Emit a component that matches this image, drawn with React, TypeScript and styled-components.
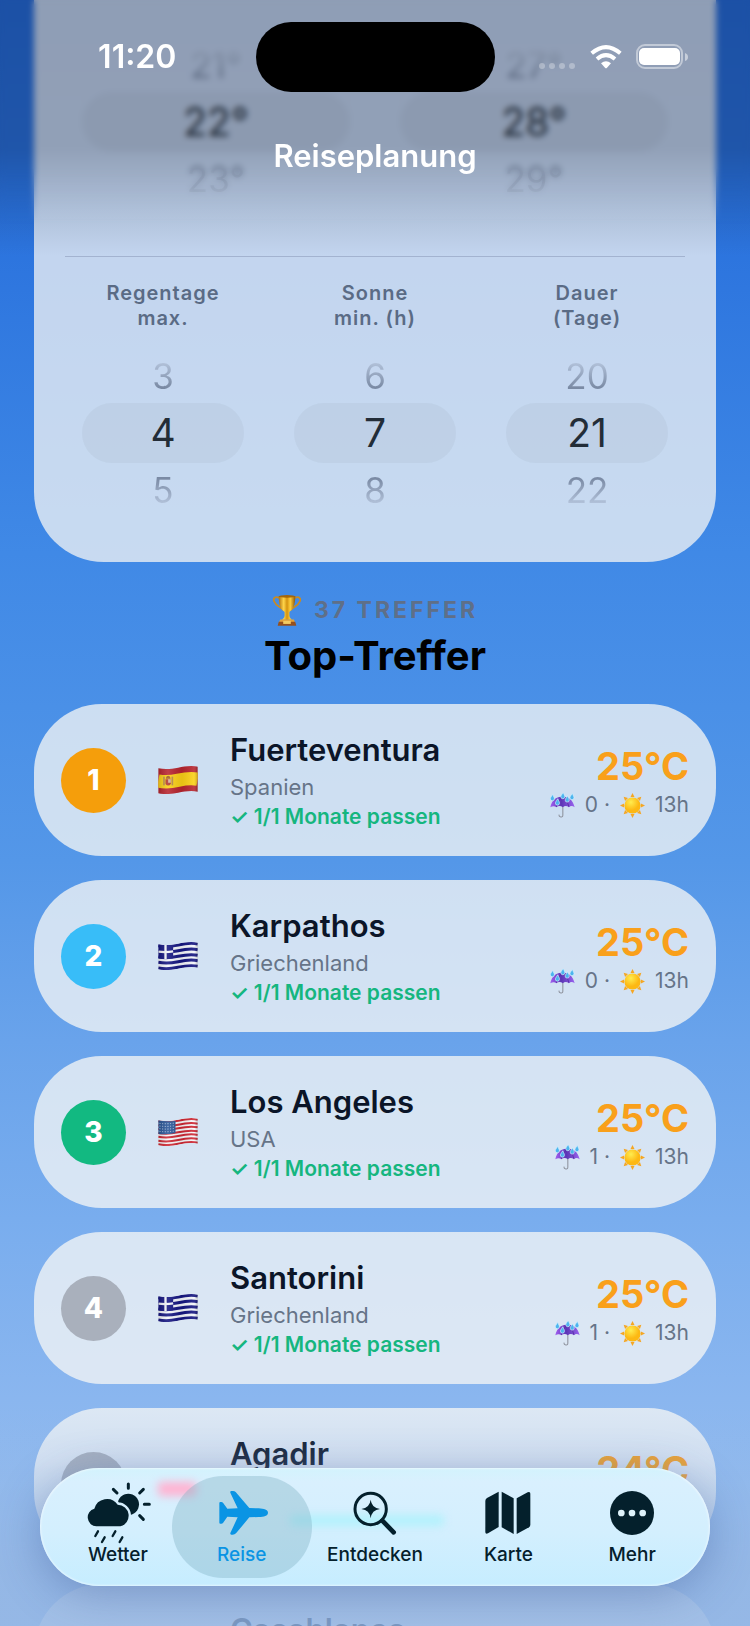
import { ReactNode, useId, useState } from 'react';
import styled, { createGlobalStyle } from 'styled-components';

const GlobalStyle = createGlobalStyle`
  * {
    box-sizing: border-box;
  }

  body {
    margin: 0;
    font-family: Inter, 'Liberation Sans', sans-serif;
    -webkit-font-smoothing: antialiased;
  }

  button {
    font: inherit;
  }
`;

const Screen = styled.div`
  position: relative;
  height: 100vh;
  overflow: hidden;
  background: linear-gradient(
    180deg,
    #266bd9 0%,
    #2c74de 15%,
    #4089e6 34%,
    #5497e8 53%,
    #69a3eb 64%,
    #79adee 75%,
    #8ab6ef 86%,
    #9ac0ee 100%
  );
`;

/* Header */

const Header = styled.header`
  position: absolute;
  inset: 0 0 auto;
  z-index: 1;
  height: 256px;
  padding-top: 22px;
  color: #fff;
  background: linear-gradient(
    180deg,
    rgba(0, 6, 20, 0.26) 0%,
    rgba(0, 6, 20, 0.25) 58%,
    rgba(0, 6, 20, 0.1) 82%,
    rgba(0, 6, 20, 0) 100%
  );

  &::before {
    content: '';
    position: absolute;
    inset: 0 0 32px;
    z-index: -1;
    backdrop-filter: blur(3px);
    mask-image: linear-gradient(180deg, #000 75%, transparent 100%);
  }
`;

const StatusBar = styled.div`
  display: grid;
  grid-template-columns: 1fr auto 1fr;
  align-items: center;
  justify-items: center;
  padding: 0 19px;
`;

const Time = styled.time`
  font-size: 32px;
  font-weight: 600;
  line-height: 40px;
`;

const Island = styled.div`
  width: 239px;
  height: 70px;
  border-radius: 35px;
  background: #000;
`;

const StatusIcons = styled.div`
  display: flex;
  align-items: center;
  gap: 14px;
`;

const Title = styled.h1`
  margin: 44px 0 0;
  font-size: 31px;
  font-weight: 600;
  line-height: 40px;
  text-align: center;
`;

/* Filters */

const Content = styled.main`
  padding: 0 34px;
`;

const FilterCard = styled.section`
  padding: 38px 31px 45px;
  border-radius: 0 0 70px 70px;
  background: rgba(245, 246, 244, 0.75);
`;

const PickerRow = styled.div`
  display: flex;
  gap: 16px;
`;

const Divider = styled.hr`
  height: 1px;
  margin: 50px 0 24px;
  border: 0;
  background: #a3b3d0;
`;

const PickerGroup = styled.fieldset`
  flex: 1;
  min-width: 0;
  margin: 0;
  padding: 0 17px;
  border: 0;
`;

const PickerLabel = styled.legend`
  width: 100%;
  padding: 0 0 18px;
  color: #5a6b85;
  font-size: 20px;
  font-weight: 600;
  letter-spacing: 1px;
  line-height: 25px;
  text-align: center;
  white-space: pre-line;
`;

const HiddenLegend = styled.legend`
  position: absolute;
  width: 1px;
  height: 1px;
  padding: 0;
  overflow: hidden;
  clip-path: inset(50%);
`;

const Option = styled.label<{ $offset: number }>`
  display: block;
  height: ${({ $offset }) => ($offset === 0 ? 60 : 54)}px;
  border-radius: 30px;
  background: ${({ $offset }) => ($offset === 0 ? 'rgba(120, 130, 140, 0.09)' : 'none')};
  color: #232d38;
  font-size: ${({ $offset }) => ($offset === 0 ? 39 : 35)}px;
  line-height: ${({ $offset }) => ($offset === 0 ? 60 : 54)}px;
  text-align: center;
  cursor: pointer;

  input {
    position: absolute;
    opacity: 0;
    pointer-events: none;
  }

  span {
    display: block;
    ${({ $offset }) =>
      $offset !== 0 &&
      `
      color: transparent;
      background: linear-gradient(${$offset < 0 ? 180 : 0}deg, #b3c3db 24%, #7a8aa4 72%);
      background-clip: text;
    `}
  }
`;

/* Results */

const ResultsHeader = styled.div`
  display: flex;
  flex-direction: column;
  align-items: center;
  padding: 29px 0 22px;
`;

const HitCount = styled.p`
  display: flex;
  align-items: center;
  gap: 12px;
  margin: 0;
  color: #5f6f88;
  font-size: 23px;
  font-weight: 700;
  letter-spacing: 3px;
  line-height: 38px;
`;

const ResultsTitle = styled.h2`
  margin: 0;
  color: #000;
  font-size: 40px;
  font-weight: 700;
  line-height: 53px;
`;

const ResultList = styled.ol`
  display: flex;
  flex-direction: column;
  gap: 24px;
  margin: 0;
  padding: 0;
  list-style: none;
`;

const ResultCard = styled.li`
  display: flex;
  align-items: center;
  gap: 24px;
  height: 152px;
  padding: 0 27px;
  border-radius: 68px;
  background: rgba(248, 248, 246, 0.75);
`;

const Rank = styled.span<{ $color: string }>`
  display: flex;
  flex: none;
  align-items: center;
  justify-content: center;
  width: 65px;
  height: 65px;
  border-radius: 50%;
  background: ${({ $color }) => $color};
  color: #fff;
  font-size: 28px;
  font-weight: 800;
`;

const FlagSlot = styled.span`
  display: flex;
  flex: none;
  justify-content: center;
  width: 56px;
`;

const Place = styled.div`
  flex: 1;
  min-width: 0;
`;

const PlaceName = styled.h3`
  margin: 0;
  color: #0b1528;
  font-size: 31px;
  font-weight: 600;
  line-height: 42px;
`;

const Country = styled.p`
  margin: 0;
  color: #667488;
  font-size: 22px;
  line-height: 32px;
`;

const Match = styled.p`
  margin: 0;
  color: #15b67f;
  font-size: 21px;
  font-weight: 600;
  line-height: 28px;
`;

const Climate = styled.div`
  flex: none;
  padding-top: 6px;
  text-align: right;
`;

const Temperature = styled.p`
  margin: 0;
  color: #f9a01b;
  font-size: 38px;
  font-weight: 700;
  line-height: 44px;
`;

const Details = styled.p`
  display: flex;
  align-items: center;
  justify-content: flex-end;
  gap: 10px;
  margin: 0;
  color: #667488;
  font-size: 21px;
  line-height: 34px;
`;

/* Tab bar */

const BottomFade = styled.div`
  position: absolute;
  inset: auto 0 0;
  height: 220px;
  background: linear-gradient(
    180deg,
    rgba(148, 182, 228, 0) 0%,
    rgba(148, 182, 228, 0.18) 25%,
    rgba(148, 182, 228, 0.82) 75%
  );
  pointer-events: none;
`;

const TabBar = styled.nav`
  position: absolute;
  inset: auto 40px 40px;
  display: grid;
  grid-template-columns: 1fr 1fr 143px 1fr 1fr;
  height: 118px;
  padding: 8px 16px;
  border-radius: 59px;
  background: linear-gradient(180deg, #d2f3fd 0%, #d9f0fe 12%, #d3effe 55%, #c6edff 100%);
  box-shadow:
    inset 0 0 2px 1px rgba(255, 255, 255, 0.5),
    0 8px 44px rgba(50, 78, 140, 0.36);
`;

const Glint = styled.span<{ $color: string }>`
  position: absolute;
  border-radius: 4px;
  background: ${({ $color }) => $color};
  filter: blur(4px);
`;

const PinkGlint = styled(Glint)`
  inset: 14px auto auto 118px;
  width: 38px;
  height: 14px;
`;

const CyanGlint = styled(Glint)`
  inset: 47px auto auto 250px;
  width: 154px;
  height: 11px;
`;

const Tab = styled.button<{ $active: boolean }>`
  position: relative;
  display: flex;
  flex-direction: column;
  align-items: center;
  margin: 0 -8px;
  padding: 7px 0 0;
  border: 0;
  border-radius: 51px;
  background: ${({ $active }) => ($active ? 'rgba(125, 175, 195, 0.38)' : 'none')};
  color: ${({ $active }) => ($active ? '#0a94e4' : '#04202c')};
  font-size: 19px;
  font-weight: 500;
  line-height: 24px;
  cursor: pointer;

  svg {
    overflow: visible;
  }
`;

const wave = (y: number) => `M0 ${y} C20 ${y + 4} 42 ${y + 2} 60 ${y - 2} S100 ${y - 9} 119 ${y - 5}`;

function WavingFlag({ children }: { children: ReactNode }) {
  const id = useId();

  return (
    <svg width="40" height="28" viewBox="0 0 119 84" aria-hidden="true">
      <defs>
        <clipPath id={`${id}-cloth`}>
          <path d="M0 7 C20 11 42 9 60 5 S100 -2 119 2 V77 C100 73 78 76 60 80 S20 86 0 82Z" />
        </clipPath>
        <linearGradient id={`${id}-fold`}>
          <stop offset="0" stopColor="#000" stopOpacity="0.15" />
          <stop offset="0.25" stopColor="#fff" stopOpacity="0.12" />
          <stop offset="0.6" stopColor="#000" stopOpacity="0.08" />
          <stop offset="0.9" stopColor="#fff" stopOpacity="0.1" />
          <stop offset="1" stopColor="#000" stopOpacity="0.25" />
        </linearGradient>
      </defs>
      <g clipPath={`url(#${id}-cloth)`}>
        {children}
        <rect width="119" height="84" fill={`url(#${id}-fold)`} />
      </g>
    </svg>
  );
}

function SpainFlag() {
  return (
    <WavingFlag>
      <rect width="119" height="84" fill="#b8252f" />
      <path d={wave(45)} stroke="#fbd116" strokeWidth="40" fill="none" />
      <rect x="15" y="32" width="5" height="26" fill="#b98c4a" />
      <rect x="40" y="32" width="5" height="26" fill="#b98c4a" />
      <path d="M22 40 H38 V54 Q30 63 22 54Z" fill="#b53a2e" />
      <path d="M30 40 H38 V50 H30Z" fill="#d7b7a2" />
      <path d="M23 38 Q24 29 30 29 T37 38Z" fill="#a35f25" />
    </WavingFlag>
  );
}

function GreeceFlag() {
  return (
    <WavingFlag>
      <rect width="119" height="84" fill="#f4f6fb" />
      {[11, 28, 45, 61, 78].map((y) => (
        <path key={y} d={wave(y)} stroke="#151682" strokeWidth="9" fill="none" />
      ))}
      <path d="M0 7 Q24 12 45 8 V49 Q24 53 0 49Z" fill="#151682" />
      <path d="M0 29 Q24 32 45 28 M22 8 V52" stroke="#f4f6fb" strokeWidth="7" fill="none" />
    </WavingFlag>
  );
}

function UsaFlag() {
  return (
    <WavingFlag>
      <rect width="119" height="84" fill="#f8f8fa" />
      {[10, 22, 33, 45, 56, 68, 79].map((y) => (
        <path key={y} d={wave(y)} stroke="#cf2733" strokeWidth="6" fill="none" />
      ))}
      <path d="M0 6 Q26 12 52 8 V45 Q26 51 0 48Z" fill="#2a5698" />
      {[15, 23, 31, 39].map((y) => (
        <path
          key={y}
          d={`M4 ${y + 1} Q26 ${y + 4} 50 ${y}`}
          stroke="#c6d6ec"
          strokeWidth="3"
          strokeDasharray="3 5"
          fill="none"
        />
      ))}
    </WavingFlag>
  );
}

function MoroccoFlag() {
  return (
    <WavingFlag>
      <rect width="119" height="84" fill="#c1272d" />
      <path d="M60 24 L71 58 L42 37 H78 L49 58Z" fill="none" stroke="#006233" strokeWidth="4" />
    </WavingFlag>
  );
}

function TrophyIcon() {
  return (
    <svg width="30" height="31" viewBox="0 0 84 90" aria-hidden="true">
      <defs>
        <linearGradient id="trophy-gold">
          <stop offset="0" stopColor="#b06f0c" />
          <stop offset="0.3" stopColor="#ffd54a" />
          <stop offset="0.5" stopColor="#d4930f" />
          <stop offset="0.7" stopColor="#ffcf3d" />
          <stop offset="1" stopColor="#8f5607" />
        </linearGradient>
      </defs>
      <path
        d="M20 9 C8 3 0 9 5 19 C9 31 21 33 32 44 M64 9 C76 3 84 9 79 19 C75 31 63 33 52 44"
        fill="none"
        stroke="#c98b22"
        strokeWidth="5"
      />
      <path d="M18 3 H66 C66 30 60 42 49 49 V60 C49 66 54 69 57 72 H27 C30 69 35 66 35 60 V49 C24 42 18 30 18 3Z" fill="url(#trophy-gold)" />
      <ellipse cx="42" cy="4" rx="24" ry="4" fill="#a5660a" />
      <path d="M22 71 H62 L65 79 H19Z" fill="#e4a33b" />
      <path d="M18 78 H66 L69 89 H15Z" fill="#96501d" />
      <rect x="31" y="75" width="22" height="9" fill="#f3cb63" />
    </svg>
  );
}

function UmbrellaIcon() {
  return (
    <svg width="25" height="25" viewBox="0 0 74 74" role="img" aria-label="Regentage">
      <defs>
        <linearGradient id="umbrella-cloth">
          <stop offset="0" stopColor="#a15ff0" />
          <stop offset="0.45" stopColor="#5b35b5" />
          <stop offset="1" stopColor="#9a63ef" />
        </linearGradient>
      </defs>
      <path d="M38 38 V66 Q38 72 32 71 Q26 70 27 64" fill="none" stroke="#8b8f99" strokeWidth="3" />
      <path d="M1 42 C5 20 20 10 37 10 S68 20 73 42 C66 37 60 38 56 42 C50 37 43 37 38 42 C32 37 24 37 19 42 C14 38 8 38 1 42Z" fill="url(#umbrella-cloth)" />
      <path d="M37 11 C28 19 22 28 19 41 M37 11 C47 19 53 28 56 41" fill="none" stroke="#4a2996" strokeWidth="2" />
      {['M8 4', 'M23 17', 'M39 -2', 'M52 8', 'M66 1'].map((start) => (
        <path key={start} d={`${start} c-5 8 -7 10 -7 13 a6 6 0 0 0 12 0 c0 -3 -2 -6 -5 -13z`} fill="#4cb5ee" stroke="#d7f1ff" strokeWidth="2" />
      ))}
    </svg>
  );
}

function SunIcon() {
  return (
    <svg width="25" height="25" viewBox="-37 -37 74 74" role="img" aria-label="Sonnenstunden">
      <defs>
        <radialGradient id="sun-disc" cx="0.4" cy="0.3">
          <stop offset="0" stopColor="#ffec4f" />
          <stop offset="1" stopColor="#fdb813" />
        </radialGradient>
      </defs>
      {[0, 45, 90, 135, 180, 225, 270, 315].map((angle) => (
        <path key={angle} d="M0 -37 L6 -25 H-6Z" fill="#f5a623" transform={`rotate(${angle})`} />
      ))}
      <circle r="24" fill="url(#sun-disc)" />
    </svg>
  );
}

function SignalDots() {
  return (
    <svg width="38" height="8" viewBox="0 0 38 8" aria-hidden="true">
      {[4, 14, 24, 34].map((x) => (
        <circle key={x} cx={x} cy="4" r="3" fill="#fff" fillOpacity="0.3" />
      ))}
    </svg>
  );
}

// The dots sit on the baseline of the other status icons
const Signal = styled.span`
  display: flex;
  align-self: flex-end;
`;

function WifiIcon() {
  return (
    <svg width="32" height="24" viewBox="0 0 96 72" aria-hidden="true">
      <g fill="none" stroke="#fff" strokeWidth="12">
        <path d="M5 25 Q48 -12 91 25" />
        <path d="M21 42 Q48 19 75 42" />
      </g>
      <path d="M33 55 Q48 43 63 55 L51 68 Q48 71 45 68Z" fill="#fff" />
    </svg>
  );
}

function BatteryIcon() {
  return (
    <svg width="52" height="26" viewBox="0 0 52 26" aria-hidden="true">
      <rect x="1" y="1" width="45" height="23" rx="8" fill="none" stroke="#fff" strokeOpacity="0.45" strokeWidth="2" />
      <rect x="3" y="4" width="41" height="17" rx="5" fill="#fff" />
      <path d="M49 9 Q52 10 52 13 T49 17Z" fill="#fff" fillOpacity="0.5" />
    </svg>
  );
}

const CLOUD = 'M290 410 A27 27 0 0 1 284 357 A39 39 0 0 1 354 345 A33 33 0 0 1 362 410Z';

function WeatherIcon() {
  return (
    <svg width="66" height="60" viewBox="256 280 198 180" aria-hidden="true">
      <defs>
        <mask id="behind-cloud" maskUnits="userSpaceOnUse" x="256" y="270" width="210" height="200">
          <rect x="256" y="270" width="210" height="200" fill="#fff" />
          <path d={CLOUD} fill="#000" stroke="#000" strokeWidth="14" />
        </mask>
      </defs>
      <path d={CLOUD} fill="currentColor" />
      <circle cx="386" cy="344" r="32" fill="currentColor" mask="url(#behind-cloud)" />
      <g stroke="currentColor" strokeLinecap="round" fill="none">
        <path
          d="M386 283 V296 M420 310 L431 299 M434 344 H449 M420 378 L431 389 M341 299 L352 310"
          strokeWidth="9"
        />
        <path
          d="M295 425 L287 439 M315 443 L307 457 M347 425 L339 439 M368 443 L360 457"
          strokeWidth="7"
        />
      </g>
    </svg>
  );
}

function PlaneIcon() {
  return (
    <svg width="60" height="60" viewBox="640 280 180 180" aria-hidden="true">
      <path
        fill="currentColor"
        d="M808 369 C808 378 796 382 780 382 L752 383 L712 431 Q708 435 702 435 H698 Q694 434 695 430 L717 383 L686 381 L673 400 Q671 402 668 402 H665 Q662 402 662 399 V340 Q662 337 665 337 H668 Q671 337 673 339 L686 357 L717 356 L695 309 Q694 304 698 304 H703 Q708 304 711 307 L752 355 L780 356 C796 357 808 360 808 369Z"
      />
    </svg>
  );
}

function DiscoverIcon() {
  return (
    <svg width="60" height="60" viewBox="1034 280 180 180" aria-hidden="true">
      <circle cx="1111" cy="358" r="47" fill="none" stroke="currentColor" strokeWidth="9" />
      <path d="M1146 393 L1180 428" stroke="currentColor" strokeWidth="14" strokeLinecap="round" />
      <path
        fill="currentColor"
        d="M1111 330 Q1114 355 1139 358 Q1114 361 1111 386 Q1108 361 1083 358 Q1108 355 1111 330Z"
      />
    </svg>
  );
}

function MapIcon() {
  return (
    <svg width="60" height="60" viewBox="308 280 180 180" aria-hidden="true">
      <g fill="currentColor">
        <path d="M370 306 V412 L338 431 Q330 434 330 427 V334 Q330 328 335 325Z" />
        <path d="M379 306 L415 326 V433 L379 413Z" />
        <path d="M424 326 L457 308 Q465 305 465 312 V405 Q465 410 461 413 L424 433Z" />
      </g>
    </svg>
  );
}

function MoreIcon() {
  return (
    <svg width="60" height="60" viewBox="678 280 180 180" aria-hidden="true">
      <circle cx="768" cy="370" r="66" fill="currentColor" />
      {[736, 768, 800].map((x) => (
        <circle key={x} cx={x} cy="370" r="10" fill="#dff3fb" />
      ))}
    </svg>
  );
}

type PickerProps = {
  label: string;
  initial: number;
  unit?: string;
  hideLabel?: boolean;
};

function Picker({ label, initial, unit = '', hideLabel }: PickerProps) {
  const name = useId();
  const [value, setValue] = useState(initial);
  const Legend = hideLabel ? HiddenLegend : PickerLabel;

  return (
    <PickerGroup>
      <Legend>{label}</Legend>
      {[-1, 0, 1].map((offset) => (
        <Option key={value + offset} $offset={offset}>
          <input
            type="radio"
            name={name}
            checked={offset === 0}
            onChange={() => setValue(value + offset)}
          />
          <span>
            {value + offset}
            {unit}
          </span>
        </Option>
      ))}
    </PickerGroup>
  );
}

const results = [
  { name: 'Fuerteventura', country: 'Spanien', flag: <SpainFlag />, color: '#f59e0b', temp: 25, rain: 0, sun: 13 },
  { name: 'Karpathos', country: 'Griechenland', flag: <GreeceFlag />, color: '#38bdf8', temp: 25, rain: 0, sun: 13 },
  { name: 'Los Angeles', country: 'USA', flag: <UsaFlag />, color: '#12b981', temp: 25, rain: 1, sun: 13 },
  { name: 'Santorini', country: 'Griechenland', flag: <GreeceFlag />, color: '#a9b0bc', temp: 25, rain: 1, sun: 13 },
  { name: 'Agadir', country: 'Marokko', flag: <MoroccoFlag />, color: '#a9b0bc', temp: 24, rain: 1, sun: 12 },
  { name: 'Casablanca', country: 'Marokko', flag: <MoroccoFlag />, color: '#a9b0bc', temp: 24, rain: 1, sun: 12 },
];

const tabs = [
  { label: 'Wetter', icon: <WeatherIcon /> },
  { label: 'Reise', icon: <PlaneIcon /> },
  { label: 'Entdecken', icon: <DiscoverIcon /> },
  { label: 'Karte', icon: <MapIcon /> },
  { label: 'Mehr', icon: <MoreIcon /> },
];

function App() {
  const [activeTab, setActiveTab] = useState('Reise');

  return (
    <Screen>
      <GlobalStyle />

      <Header>
        <StatusBar>
          <Time>11:20</Time>
          <Island />
          <StatusIcons>
            <Signal>
              <SignalDots />
            </Signal>
            <WifiIcon />
            <BatteryIcon />
          </StatusIcons>
        </StatusBar>
        <Title>Reiseplanung</Title>
      </Header>

      <Content>
        <FilterCard>
          <PickerRow>
            <Picker label="Temperatur min." initial={22} unit="°" hideLabel />
            <Picker label="Temperatur max." initial={28} unit="°" hideLabel />
          </PickerRow>
          <Divider />
          <PickerRow>
            <Picker label={'Regentage\nmax.'} initial={4} />
            <Picker label={'Sonne\nmin. (h)'} initial={7} />
            <Picker label={'Dauer\n(Tage)'} initial={21} />
          </PickerRow>
        </FilterCard>

        <ResultsHeader>
          <HitCount>
            <TrophyIcon />
            37 TREFFER
          </HitCount>
          <ResultsTitle>Top-Treffer</ResultsTitle>
        </ResultsHeader>

        <ResultList>
          {results.map(({ name, country, flag, color, temp, rain, sun }, index) => (
            <ResultCard key={name}>
              <Rank $color={color}>{index + 1}</Rank>
              <FlagSlot>{flag}</FlagSlot>
              <Place>
                <PlaceName>{name}</PlaceName>
                <Country>{country}</Country>
                <Match>✓ 1/1 Monate passen</Match>
              </Place>
              <Climate>
                <Temperature>{temp}°C</Temperature>
                <Details>
                  <UmbrellaIcon />
                  <span>{rain} ·</span>
                  <SunIcon />
                  <span>{sun}h</span>
                </Details>
              </Climate>
            </ResultCard>
          ))}
        </ResultList>
      </Content>

      <BottomFade />
      <TabBar>
        <PinkGlint $color="#ffb3d2" />
        <CyanGlint $color="#b2f1fc" />
        {tabs.map(({ label, icon }) => (
          <Tab key={label} $active={label === activeTab} onClick={() => setActiveTab(label)}>
            {icon}
            {label}
          </Tab>
        ))}
      </TabBar>
    </Screen>
  );
}

export default App;
